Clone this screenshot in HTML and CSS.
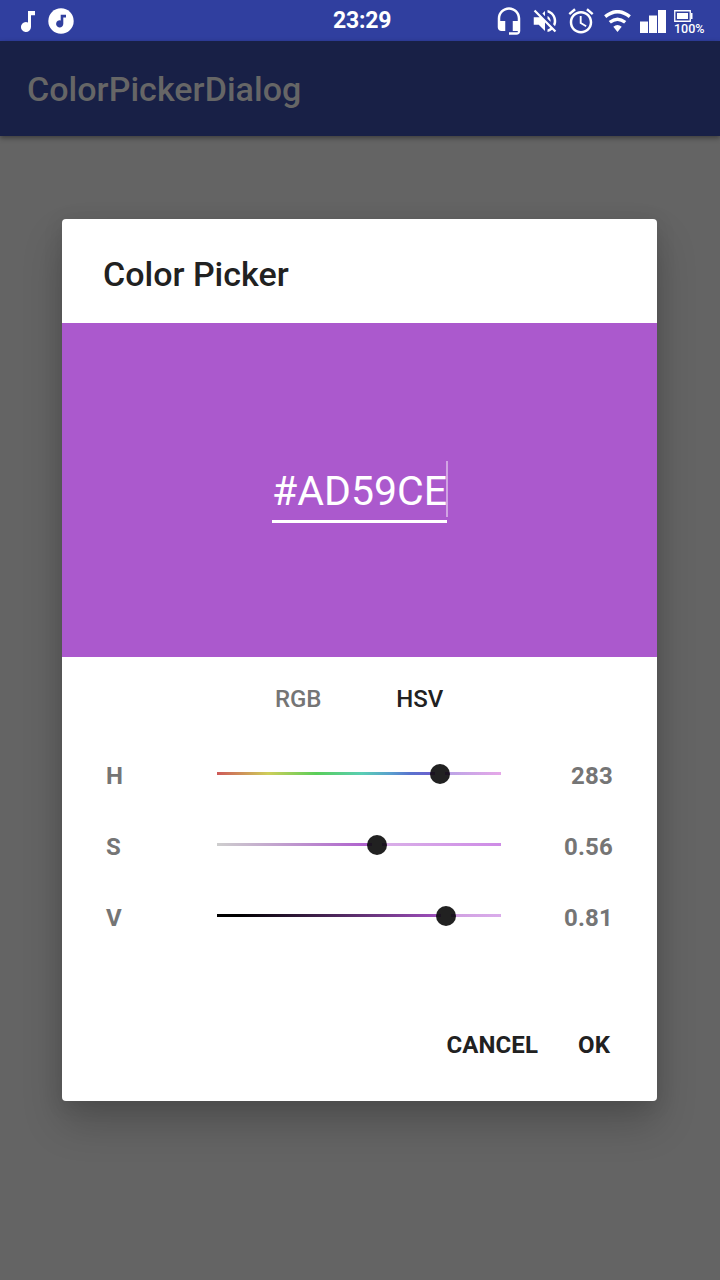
FILE: index.html
```html
<!DOCTYPE html>
<html lang="en">
<head>
<meta charset="utf-8">
<title>ColorPickerDialog</title>
<link rel="stylesheet" href="styles.css">
</head>
<body>
<div class="screen">
  <header class="status-bar">
    <div class="notifications">
      <svg class="note" viewBox="0 0 14 21"><path d="M7 0h7v4.300h-4V16a5 5 0 1 1-3-4.600z"/></svg>
      <svg class="note-circle" viewBox="0 0 26 26"><circle cx="13" cy="13" r="12.700"/><path class="cutout" d="M12.700 6.700H18v2.700h-2.700V15.800a3.600 3.600 0 1 1-2.600-3.400z"/></svg>
    </div>
    <time class="clock">23:29</time>
    <div class="system-icons">
      <span class="slot"><svg class="i30" viewBox="0 0 24 24"><path d="M12 1c-4.970 0-9 4.030-9 9v7c0 1.660 1.340 3 3 3h3v-8H5v-2c0-3.870 3.130-7 7-7s7 3.130 7 7v2h-4v8h4v1h-7v2h6c1.660 0 3-1.340 3-3V10c0-4.970-4.030-9-9-9z"/></svg></span>
      <span class="slot"><svg class="i30" viewBox="0 0 24 24"><path d="M16.500 12c0-1.770-1.020-3.290-2.500-4.030v2.210l2.450 2.450c.03-.2.050-.41.050-.63zm2.500 0c0 .94-.2 1.820-.54 2.640l1.510 1.510C20.630 14.910 21 13.500 21 12c0-4.280-2.990-7.860-7-8.770v2.060c2.890.86 5 3.540 5 6.710zM4.270 3L3 4.270 7.730 9H3v6h4l5 5v-6.730l4.250 4.250c-.67.520-1.420.930-2.250 1.180v2.060c1.380-.31 2.630-.95 3.690-1.810L19.730 21 21 19.730l-9-9L4.270 3zM12 4L9.910 6.090 12 8.180V4z"/></svg></span>
      <span class="slot"><svg class="i30" viewBox="0 0 24 24"><path d="M22 5.720l-4.600-3.860-1.290 1.530 4.600 3.860L22 5.720zM7.880 3.390L6.600 1.860 2 5.710l1.290 1.530 4.590-3.850zM12.500 8H11v6l4.750 2.850.75-1.230-4-2.370V8zM12 4c-4.970 0-9 4.030-9 9s4.020 9 9 9c4.970 0 9-4.030 9-9s-4.030-9-9-9zm0 16c-3.870 0-7-3.130-7-7s3.130-7 7-7 7 3.130 7 7-3.130 7-7 7z"/></svg></span>
      <span class="slot"><svg class="wifi" viewBox="0 0 27 22"><path class="arc" d="M1.200 6.600Q13.500-3.300 25.800 6.600M5.800 12.300Q13.500 6 21.200 12.300"/><path d="M9.300 16.700Q13.500 13.500 17.700 16.700L13.500 22z"/></svg></span>
      <span class="slot"><svg class="signal" viewBox="0 0 26 23"><path d="M0 11.500h8V23H0zM9 5.500h8V23H9zM18 0h8v23h-8z"/></svg></span>
      <span class="slot battery">
        <svg class="cell" viewBox="0 0 19 12"><path class="case" d="M.75.75h15.500v10.500H.75z"/><path d="M3 3h11v6H3zM17 3h1.500v6H17z"/></svg>
        <span class="percent">100%</span>
      </span>
    </div>
  </header>
  <div class="app-bar">ColorPickerDialog</div>
  <main class="backdrop">
    <section class="dialog">
      <h1 class="title">Color Picker</h1>
      <div class="swatch"><div class="hex">#AD59CE<span class="caret"></span></div></div>
      <nav class="tabs"><span class="tab">RGB</span><span class="tab active">HSV</span></nav>
      <div class="sliders">
        <div class="row"><span class="label">H</span><div class="track hue"><span class="thumb"></span></div><span class="value">283</span></div>
        <div class="row"><span class="label">S</span><div class="track saturation"><span class="thumb"></span></div><span class="value">0.56</span></div>
        <div class="row"><span class="label">V</span><div class="track brightness"><span class="thumb"></span></div><span class="value">0.81</span></div>
      </div>
      <footer class="actions"><span>CANCEL</span><span>OK</span></footer>
    </section>
  </main>
</div>
</body>
</html>
```
FILE: styles.css
```css
* { box-sizing: border-box; }
body { margin: 0; font-family: Roboto, "Liberation Sans", sans-serif; }
svg { display: block; fill: #fff; flex: none; }
.screen { width: 720px; height: 1280px; overflow: hidden; display: flex; flex-direction: column; background: #646464; }

.status-bar { height: 41px; flex: none; display: flex; background: #303f9f; color: #fff; }
.notifications { width: 333px; padding: 8px 0 0 21px; display: flex; gap: 13px; }
.note { width: 14px; height: 21px; margin-top: 3px; }
.note-circle { width: 26px; height: 26px; }
.cutout { fill: #303f9f; }
.clock { width: 158px; font-size: 23px; font-weight: 700; line-height: 42px; letter-spacing: -.2px; }
.system-icons { display: flex; }
.slot { width: 36px; height: 42px; display: flex; align-items: center; justify-content: center; }
.i30 { width: 30px; height: 30px; }
.wifi { width: 27px; height: 22px; }
.arc { fill: none; stroke: #fff; stroke-width: 3.400; }
.signal { width: 26px; height: 23px; }
.battery { flex-direction: column; align-items: flex-start; justify-content: flex-start; padding: 10px 0 0 3px; }
.cell { width: 19px; height: 12px; }
.case { fill: none; stroke: #fff; stroke-width: 1.300; }
.percent { font-size: 12.500px; font-weight: 500; line-height: 14px; }

.app-bar { height: 95px; flex: none; padding-left: 27px; background: #182046; color: #666; font-size: 34px; font-weight: 500; line-height: 97px; letter-spacing: .04px; box-shadow: 0 2px 5px rgba(0, 0, 0, .4); z-index: 1; }

.backdrop { flex: 1; padding: 83px 0 0 62px; }
.dialog { width: 595px; height: 882px; border-radius: 4px; background: #fff; color: #212121; overflow: hidden; display: flex; flex-direction: column; box-shadow: 0 22px 40px rgba(0, 0, 0, .2), 0 4px 20px rgba(0, 0, 0, .1); }
.dialog > * { flex: none; }
.title { margin: 0; height: 104px; padding-left: 41px; font-size: 34px; font-weight: 500; line-height: 110px; }
.swatch { height: 334px; padding-top: 138px; display: flex; justify-content: center; align-items: flex-start; background: #ab59cd; }
.hex { position: relative; width: 175px; height: 62px; border-bottom: 3px solid #fff; color: #fff; font-size: 41px; line-height: 61px; white-space: nowrap; }
.caret { position: absolute; right: -1px; top: 0; width: 2px; height: 56px; background: rgba(255, 255, 255, .45); }

.tabs { height: 83px; padding-left: 213px; display: flex; gap: 75px; font-size: 24px; font-weight: 500; line-height: 84px; letter-spacing: -.1px; }
.tab { color: #757575; }
.tab.active { color: #212121; }
.sliders { padding: 0 44px; display: flex; flex-direction: column; }
.row { height: 71px; display: grid; grid-template-columns: 111px 284px 1fr; align-items: start; color: #757575; font-size: 24px; font-weight: 700; line-height: 72px; }
.value { text-align: right; letter-spacing: .2px; }
.track { position: relative; height: 3px; margin-top: 32px; }
.hue { background: linear-gradient(to right, #ce5959 0%, #cece59 18%, #59ce59 35%, #59ceb4 51%, #599fce 61%, #5973ce 68%, #7359ce 78.500%, #b5a3e6 78.500%, #e6a8e8 100%); }
.saturation { background: linear-gradient(to right, #cecece, #ad59ce 56.300%, #dab1e8 56.300%, #ce8be6); }
.brightness { background: linear-gradient(to right, #000 8%, #a552c4 80.600%, #cf9fe0 80.600%, #daaceb); }
.thumb { position: absolute; top: -8px; width: 20px; height: 20px; border-radius: 50%; background: linear-gradient(to right, #1b1320 5px, transparent 5px 15px, #1b1320 15px) 0 8px / 20px 3px no-repeat #212121; }
.hue .thumb { left: 213px; }
.saturation .thumb { left: 150px; }
.brightness .thumb { left: 219px; }
.actions { margin-top: 47px; padding-right: 47px; display: flex; justify-content: flex-end; gap: 40px; font-size: 24px; font-weight: 700; line-height: 90px; letter-spacing: .1px; }
```
